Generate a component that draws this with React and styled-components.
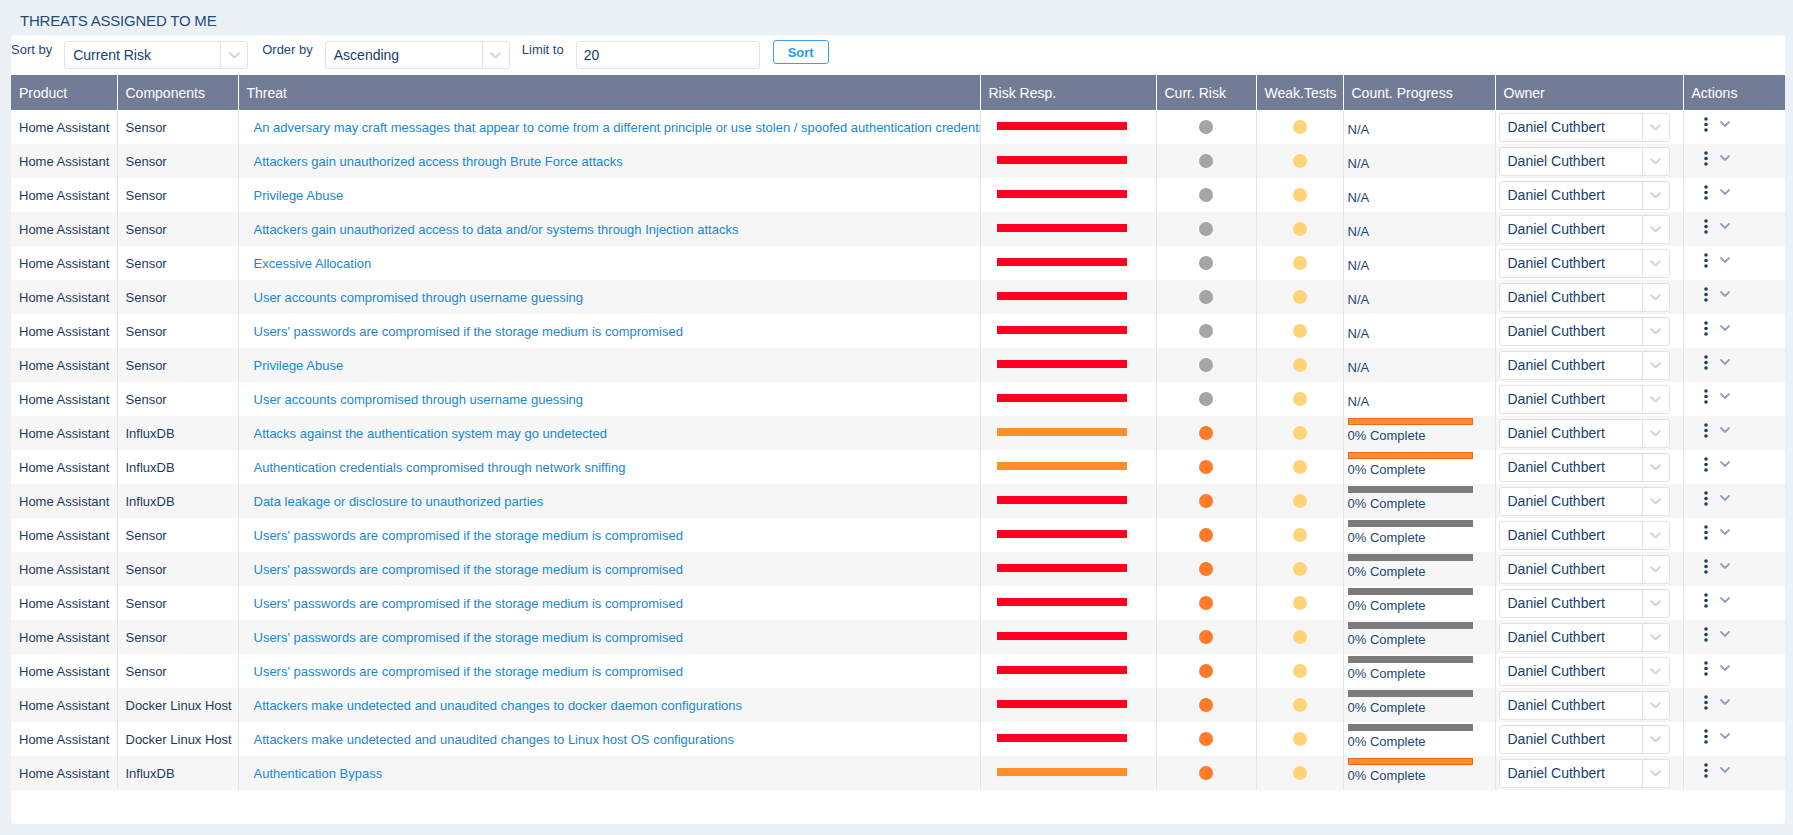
import React from "react";
import styled, { createGlobalStyle } from "styled-components";

const GlobalStyle = createGlobalStyle`
  body {
    margin: 0;
    background: #ecf1f5;
    font-family: "Liberation Sans", Arial, sans-serif;
  }
`;

const Page = styled.div`
  padding: 12px 8px 12px 11px;
`;

const Title = styled.h2`
  margin: 0 0 5px 9px;
  height: 18px;
  line-height: 18px;
  font-size: 15px;
  font-weight: normal;
  letter-spacing: -0.2px;
  color: #1f4d78;
`;

const Panel = styled.div`
  background: #fff;
  border-radius: 3px;
  padding-bottom: 34px;
`;

const Toolbar = styled.div`
  display: flex;
  align-items: flex-start;
  padding: 6px 0;
`;

const Label = styled.span`
  font-size: 13px;
  color: #1f4a75;
  margin: 1px 12px 0 0;
`;

const SelectBox = styled.div`
  display: flex;
  width: ${(p) => p.$width}px;
  height: ${(p) => p.$height}px;
  box-sizing: border-box;
  border: 1px solid #dde3e8;
  border-radius: 3px;
  background: #fff;
  margin-right: ${(p) => p.$gap || 0}px;
`;

const SelectValue = styled.span`
  flex: 1;
  display: flex;
  align-items: center;
  padding-left: 8px;
  font-size: 14px;
  color: #17406a;
  white-space: nowrap;
  overflow: hidden;
`;

const SelectArrow = styled.span`
  width: 26px;
  border-left: 1px solid #dde3e8;
  display: flex;
  align-items: center;
  justify-content: center;
`;

const Input = styled.div`
  width: 184px;
  height: 28px;
  box-sizing: border-box;
  border: 1px solid #dde3e8;
  border-radius: 3px;
  padding-left: 7px;
  display: flex;
  align-items: center;
  font-size: 14px;
  color: #17406a;
  margin-right: 13px;
`;

const SortButton = styled.button`
  width: 56px;
  height: 24px;
  margin-top: -1px;
  background: #fff;
  border: 1px solid #3b9ff0;
  border-radius: 3px;
  color: #2d98ee;
  font-family: inherit;
  font-weight: bold;
  font-size: 13px;
  padding: 0;
`;

const Table = styled.table`
  width: 100%;
  border-collapse: collapse;
  table-layout: fixed;
`;

const Th = styled.th`
  height: 35px;
  padding: 0 8px;
  background: #717d96;
  color: #fff;
  font-weight: normal;
  font-size: 14px;
  text-align: left;
  white-space: nowrap;
  overflow: hidden;
  & + & {
    border-left: 1px solid rgba(255, 255, 255, 0.75);
  }
`;

const Row = styled.tr`
  &:nth-child(even) td {
    background: #f6f6f6;
  }
`;

const Td = styled.td`
  height: 34px;
  padding: ${(p) => p.$pad || "0 8px"};
  font-size: 13px;
  color: #1c3a5e;
  white-space: nowrap;
  overflow: hidden;
  text-align: ${(p) => (p.$center ? "center" : "left")};
  vertical-align: ${(p) => (p.$top ? "top" : "middle")};
  & + & {
    border-left: 1px solid #e2e6ea;
  }
`;

const ThreatLink = styled.span`
  color: #1a87cf;
`;

const RiskBar = styled.div`
  width: 130px;
  height: 8px;
  margin: -2px 0 0 8px;
  background: ${(p) => p.$color};
`;

const Dot = styled.span`
  display: inline-block;
  width: 14px;
  height: 14px;
  border-radius: 50%;
  margin-top: -3px;
  vertical-align: middle;
  background: ${(p) => p.$color};
`;

const Progress = styled.div`
  width: 125px;
  height: 7px;
  margin-top: 2px;
  box-sizing: border-box;
  background: ${(p) => p.$fill};
  border: 1px solid ${(p) => p.$border};
`;

const ProgressText = styled.div`
  margin-top: 3px;
  line-height: 16px;
  font-size: 13px;
  color: #1b4872;
`;

const Actions = styled.div`
  display: flex;
  align-items: center;
  gap: 12px;
  margin-top: -6px;
`;

const C = {
  red: "#ff0022",
  orange: "#ff8f2b",
  dotOrange: "#ff7b29",
  dotGray: "#a5a5a5",
  yellow: "#ffd477",
};

const progressStyles = {
  orange: { fill: "#ff8e2c", border: "#ea6a1c" },
  gray: { fill: "#7b7b7b", border: "#7b7b7b" },
};

const pw = "Users' passwords are compromised if the storage medium is compromised";
const undet = "Attackers make undetected and unaudited changes to ";

const rows = [
  ["Sensor", "An adversary may craft messages that appear to come from a different principle or use stolen / spoofed authentication credentials", "red", "gray", null],
  ["Sensor", "Attackers gain unauthorized access through Brute Force attacks", "red", "gray", null],
  ["Sensor", "Privilege Abuse", "red", "gray", null],
  ["Sensor", "Attackers gain unauthorized access to data and/or systems through Injection attacks", "red", "gray", null],
  ["Sensor", "Excessive Allocation", "red", "gray", null],
  ["Sensor", "User accounts compromised through username guessing", "red", "gray", null],
  ["Sensor", pw, "red", "gray", null],
  ["Sensor", "Privilege Abuse", "red", "gray", null],
  ["Sensor", "User accounts compromised through username guessing", "red", "gray", null],
  ["InfluxDB", "Attacks against the authentication system may go undetected", "orange", "orange", "orange"],
  ["InfluxDB", "Authentication credentials compromised through network sniffing", "orange", "orange", "orange"],
  ["InfluxDB", "Data leakage or disclosure to unauthorized parties", "red", "orange", "gray"],
  ["Sensor", pw, "red", "orange", "gray"],
  ["Sensor", pw, "red", "orange", "gray"],
  ["Sensor", pw, "red", "orange", "gray"],
  ["Sensor", pw, "red", "orange", "gray"],
  ["Sensor", pw, "red", "orange", "gray"],
  ["Docker Linux Host", undet + "docker daemon configurations", "red", "orange", "gray"],
  ["Docker Linux Host", undet + "Linux host OS configurations", "red", "orange", "gray"],
  ["InfluxDB", "Authentication Bypass", "orange", "orange", "orange"],
];

const columns = [
  ["Product", 106],
  ["Components", 121],
  ["Threat", 742],
  ["Risk Resp.", 176],
  ["Curr. Risk", 100],
  ["Weak.Tests", 87],
  ["Count. Progress", 152],
  ["Owner", 188],
  ["Actions", 102],
];

function Chevron({ color, width = 10 }) {
  return (
    <svg width={width} height={width * 0.6} viewBox="0 0 10 6" fill="none">
      <path d="M1 1l4 4 4-4" stroke={color} strokeWidth="1.8" strokeLinecap="round" strokeLinejoin="round" />
    </svg>
  );
}

function Select({ value, width, height = 28, gap }) {
  return (
    <SelectBox $width={width} $height={height} $gap={gap}>
      <SelectValue>{value}</SelectValue>
      <SelectArrow>
        <Chevron color="#ccd4db" width={11} />
      </SelectArrow>
    </SelectBox>
  );
}

function KebabIcon() {
  return (
    <svg width="4" height="15" viewBox="0 0 4 15">
      <circle cx="2" cy="2" r="1.8" fill="#1a3f66" />
      <circle cx="2" cy="7.5" r="1.8" fill="#1a3f66" />
      <circle cx="2" cy="13" r="1.8" fill="#1a3f66" />
    </svg>
  );
}

export default function App() {
  return (
    <Page>
      <GlobalStyle />
      <Title>THREATS ASSIGNED TO ME</Title>
      <Panel>
        <Toolbar>
          <Label>Sort by</Label>
          <Select value="Current Risk" width={184} gap={14} />
          <Label>Order by</Label>
          <Select value="Ascending" width={185} gap={12} />
          <Label>Limit to</Label>
          <Input>20</Input>
          <SortButton>Sort</SortButton>
        </Toolbar>
        <Table>
          <colgroup>
            {columns.map(([name, w]) => (
              <col key={name} style={{ width: w }} />
            ))}
          </colgroup>
          <thead>
            <tr>
              {columns.map(([name]) => (
                <Th key={name}>{name}</Th>
              ))}
            </tr>
          </thead>
          <tbody>
            {rows.map(([component, threat, risk, dot, progress], i) => (
              <Row key={i}>
                <Td>Home Assistant</Td>
                <Td>{component}</Td>
                <Td $pad="0 8px 0 15px">
                  <ThreatLink>{threat}</ThreatLink>
                </Td>
                <Td>
                  <RiskBar $color={risk === "red" ? C.red : C.orange} />
                </Td>
                <Td $center>
                  <Dot $color={dot === "gray" ? C.dotGray : C.dotOrange} />
                </Td>
                <Td $center>
                  <Dot $color={C.yellow} />
                </Td>
                <Td $top $pad="0 4px">
                  {progress ? (
                    <Progress $fill={progressStyles[progress].fill} $border={progressStyles[progress].border} />
                  ) : (
                    <Progress $fill="transparent" $border="transparent" />
                  )}
                  <ProgressText>{progress ? "0% Complete" : "N/A"}</ProgressText>
                </Td>
                <Td $pad="0 3px">
                  <Select value="Daniel Cuthbert" width={171} height={29} />
                </Td>
                <Td $pad="0 0 0 20px">
                  <Actions>
                    <KebabIcon />
                    <Chevron color="#8ea2bb" width={10} />
                  </Actions>
                </Td>
              </Row>
            ))}
          </tbody>
        </Table>
      </Panel>
    </Page>
  );
}
